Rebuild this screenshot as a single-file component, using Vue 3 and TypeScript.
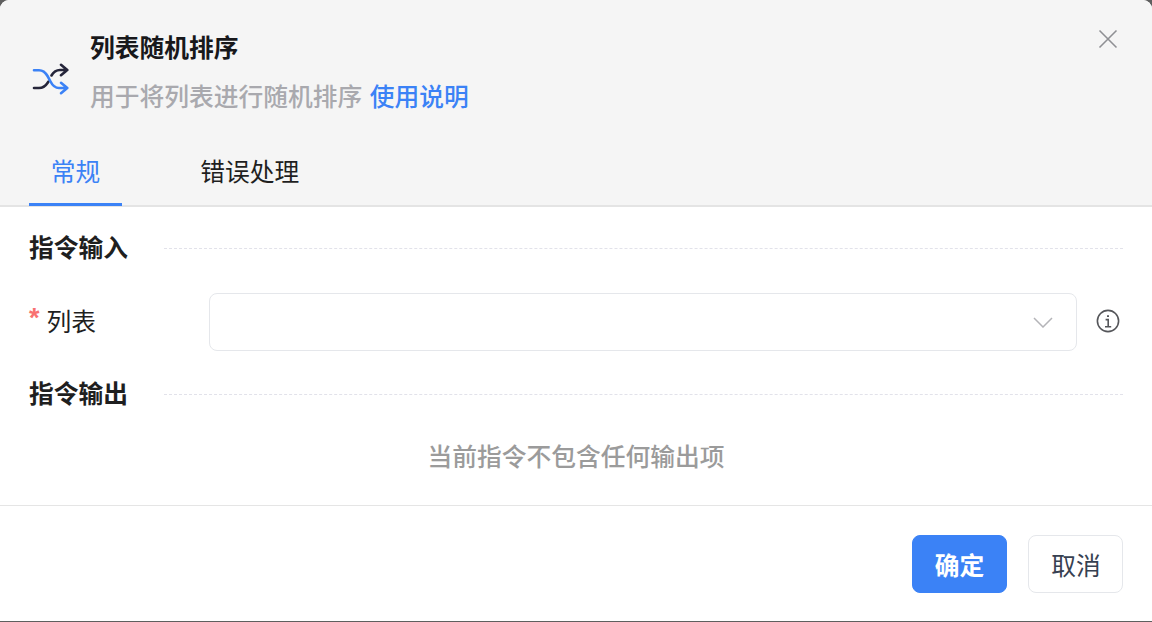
<template>
  <div class="dialog">
    <header class="dialog__header">
      <div class="dialog__top">
        <svg class="dialog__logo" width="38" height="34" viewBox="0 0 38 34" fill="none" stroke-width="2.6" stroke-linecap="round" stroke-linejoin="round">
          <path d="M2 25H7C11 25 13.5 23 15.5 20L16.5 18.5" stroke="#25253a" />
          <path d="M19.5 12.5C21.5 9 24 7 28 7H35.3M29 1.8L35.3 7L29 12.2" stroke="#25253a" />
          <path d="M2 7.2H7C11 7.2 13.5 9.5 15.5 13L18.5 18.5C20.5 22.5 23 25 27 25H35.3M29 19.8L35.3 25L29 30.2" stroke="#3b82f6" />
        </svg>
        <div class="dialog__heading">
          <div class="dialog__title">列表随机排序</div>
          <div class="dialog__desc">用于将列表进行随机排序 <a class="dialog__link">使用说明</a></div>
        </div>
        <button class="dialog__close" aria-label="关闭">
          <svg width="20" height="20" viewBox="0 0 20 20" fill="none" stroke="#8f9094" stroke-width="1.6">
            <path d="M1.5 1.5L18.5 18.5M18.5 1.5L1.5 18.5" />
          </svg>
        </button>
      </div>
      <nav class="tabs">
        <div
          v-for="(tab, i) in tabs"
          :key="tab"
          :class="['tabs__item', { 'tabs__item--active': i === activeTab }]"
          @click="activeTab = i"
        >
          {{ tab }}
        </div>
      </nav>
    </header>

    <main class="dialog__body">
      <div class="section">
        <span class="section__title">指令输入</span>
        <span class="section__line"></span>
      </div>
      <div class="field">
        <label class="field__label"><span class="field__star">*</span> 列表</label>
        <div class="select">
          <svg width="20" height="11" viewBox="0 0 20 11" fill="none" stroke="#b4b4b8" stroke-width="1.5">
            <path d="M1 1L10 10L19 1" />
          </svg>
        </div>
        <svg class="field__info" width="24" height="24" viewBox="0 0 24 24" fill="none" stroke="#55565a" stroke-width="1.6">
          <circle cx="12" cy="12" r="10.6" />
          <path d="M12 6.2V8" stroke-width="2" />
          <path d="M9.6 10.6H12.2V17.6M9 17.8H15.2" />
        </svg>
      </div>
      <div class="section section--second">
        <span class="section__title">指令输出</span>
        <span class="section__line"></span>
      </div>
      <div class="empty">当前指令不包含任何输出项</div>
    </main>

    <footer class="dialog__footer">
      <button class="btn btn--primary">确定</button>
      <button class="btn">取消</button>
    </footer>
  </div>
</template>

<script setup lang="ts">
import { ref } from 'vue';

const tabs: string[] = ['常规', '错误处理'];
const activeTab = ref<number>(0);
</script>

<style>
html,
body {
  margin: 0;
  background: #5f5f5f;
}
</style>

<style scoped>
.dialog {
  width: 1152px;
  height: 621px;
  background: #fff;
  border-radius: 9px 9px 0 0;
  overflow: hidden;
  display: flex;
  flex-direction: column;
  font-family: "Liberation Sans", "Noto Sans CJK SC", sans-serif;
  font-size: 24.75px;
  color: #1f1f1f;
}

.dialog__header {
  height: 207px;
  box-sizing: border-box;
  flex-shrink: 0;
  background: #f5f5f5;
  border-bottom: 2px solid #e4e4e4;
  padding: 0 29px;
  display: flex;
  flex-direction: column;
  justify-content: space-between;
}

.dialog__top {
  display: flex;
  align-items: flex-start;
  padding-top: 31px;
}

.dialog__logo {
  margin: 32px 22px 0 3px;
  flex-shrink: 0;
}

.dialog__heading {
  flex: 1;
  margin-left: -2px;
}

.dialog__title {
  font-weight: 700;
  line-height: 36px;
  color: #18181b;
}

.dialog__desc {
  margin-top: 13px;
  line-height: 36px;
  font-weight: 500;
  color: #a9a9ae;
}

.dialog__link {
  margin-left: 0.5px;
  color: #3b82f6;
}

.dialog__close {
  background: none;
  border: 0;
  padding: 0;
  line-height: 0;
  margin: -2px 5px 0 0;
}

.tabs {
  display: flex;
  gap: 56.5px;
}

.tabs__item {
  height: 60px;
  line-height: 54px;
  box-sizing: border-box;
  padding: 0 21.75px;
  margin-bottom: -1px;
}

.tabs__item--active {
  color: #3b82f6;
  border-bottom: 3px solid #3b82f6;
}

.dialog__body {
  flex: 1;
  padding: 0 29px;
}

.section {
  display: flex;
  align-items: center;
  height: 36px;
  margin-top: 21px;
}

.section--second {
  margin-top: 0;
}

.section__title {
  font-weight: 700;
  color: #1f1f1f;
}

.section__line {
  flex: 1;
  margin: 4px 0 0 36px;
  border-top: 1px dashed #e2e2ea;
}

.field {
  display: flex;
  align-items: center;
  height: 58px;
  margin: 29px 0 23px;
}

.field__label {
  width: 180px;
  flex-shrink: 0;
  line-height: 36px;
  margin-top: 2px;
}

.field__star {
  color: #f87171;
  font-size: 27px;
  font-weight: 700;
  line-height: 0;
  vertical-align: 4px;
}

.select {
  flex: 1;
  height: 58px;
  box-sizing: border-box;
  border: 1px solid #e5e7eb;
  border-radius: 8px;
  display: flex;
  align-items: center;
  justify-content: flex-end;
  padding-right: 23px;
}

.field__info {
  margin: -2px 3px 0 19px;
}

.empty {
  text-align: center;
  line-height: 36px;
  margin-top: 30px;
  font-weight: 500;
  color: #9b9b9b;
}

.dialog__footer {
  height: 116px;
  box-sizing: border-box;
  flex-shrink: 0;
  border-top: 1px solid #e5e5e5;
  padding: 29px 29px 0;
  display: flex;
  justify-content: flex-end;
  gap: 21px;
}

.btn {
  width: 95px;
  height: 58px;
  box-sizing: border-box;
  border: 1px solid #e5e7eb;
  border-radius: 8px;
  background: #fff;
  color: #374151;
  font: inherit;
  padding: 0 0 0 1px;
}

.btn--primary {
  background: #3b82f6;
  border-color: #3b82f6;
  color: #fff;
  font-weight: 700;
  padding: 0;
}
</style>
